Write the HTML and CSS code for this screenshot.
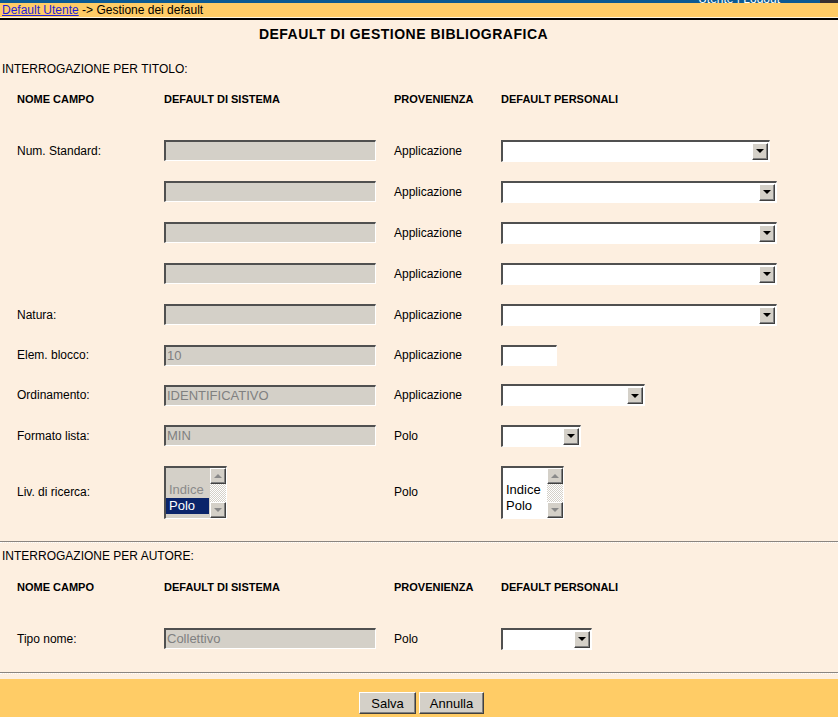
FILE: index.html
```html
<!DOCTYPE html>
<html lang="it">
<head>
<meta charset="utf-8">
<title>Gestione dei default</title>
<link rel="stylesheet" href="styles.css">
</head>
<body>
<div class="topstrip"><span class="topstrip-text">Utente | Logout</span><span class="topstrip-img"></span></div>
<div class="crumb"><a href="#" class="crumb-link">Default Utente</a> -&gt; Gestione dei default</div>
<h1 class="title">DEFAULT DI GESTIONE BIBLIOGRAFICA</h1>

<div class="section-label first">INTERROGAZIONE PER TITOLO:</div>
<div class="section">
  <div class="row head">
    <span>NOME CAMPO</span><span>DEFAULT DI SISTEMA</span><span>PROVENIENZA</span><span>DEFAULT PERSONALI</span>
  </div>
  <div class="rows">
    <div class="row r41">
      <span>Num. Standard:</span><span class="txt dis w212"></span><span>Applicazione</span>
      <div class="sel w269"><span class="sel-btn"><span class="tri-down"></span></span></div>
    </div>
    <div class="row r41">
      <span></span><span class="txt dis w212"></span><span>Applicazione</span>
      <div class="sel w276"><span class="sel-btn"><span class="tri-down"></span></span></div>
    </div>
    <div class="row r41">
      <span></span><span class="txt dis w212"></span><span>Applicazione</span>
      <div class="sel w276"><span class="sel-btn"><span class="tri-down"></span></span></div>
    </div>
    <div class="row r41">
      <span></span><span class="txt dis w212"></span><span>Applicazione</span>
      <div class="sel w276"><span class="sel-btn"><span class="tri-down"></span></span></div>
    </div>
    <div class="row r41">
      <span>Natura:</span><span class="txt dis w212"></span><span>Applicazione</span>
      <div class="sel w276"><span class="sel-btn"><span class="tri-down"></span></span></div>
    </div>
    <div class="row r40">
      <span>Elem. blocco:</span><span class="txt dis w212">10</span><span>Applicazione</span>
      <span class="txt w56"></span>
    </div>
    <div class="row r40">
      <span>Ordinamento:</span><span class="txt dis w212">IDENTIFICATIVO</span><span>Applicazione</span>
      <div class="sel w144"><span class="sel-btn"><span class="tri-down"></span></span></div>
    </div>
    <div class="row r41">
      <span>Formato lista:</span><span class="txt dis w212">MIN</span><span>Polo</span>
      <div class="sel w80"><span class="sel-btn"><span class="tri-down"></span></span></div>
    </div>
    <div class="row r72">
      <span>Liv. di ricerca:</span>
      <div class="list dis">
        <div class="list-items">
          <span class="opt">Indice</span>
          <span class="opt selected">Polo</span>
        </div>
        <div class="sbar">
          <span class="sbtn"><span class="tri-up"></span></span>
          <span class="strack"></span>
          <span class="sbtn"><span class="tri-dn"></span></span>
        </div>
      </div>
      <span>Polo</span>
      <div class="list">
        <div class="list-items">
          <span class="opt">Indice</span>
          <span class="opt">Polo</span>
        </div>
        <div class="sbar">
          <span class="sbtn"><span class="tri-up"></span></span>
          <span class="strack"></span>
          <span class="sbtn"><span class="tri-dn"></span></span>
        </div>
      </div>
    </div>
  </div>
</div>

<div class="divider d1"></div>

<div class="section-label second">INTERROGAZIONE PER AUTORE:</div>
<div class="section">
  <div class="row head head2">
    <span>NOME CAMPO</span><span>DEFAULT DI SISTEMA</span><span>PROVENIENZA</span><span>DEFAULT PERSONALI</span>
  </div>
  <div class="row r41 tipo">
    <span>Tipo nome:</span><span class="txt dis w212">Collettivo</span><span>Polo</span>
    <div class="sel w91"><span class="sel-btn"><span class="tri-down"></span></span></div>
  </div>
</div>

<div class="divider d2"></div>

<div class="footer">
  <button class="btn b-salva" type="button">Salva</button>
  <button class="btn b-annulla" type="button">Annulla</button>
</div>
</body>
</html>
```
FILE: styles.css
```css
html, body {
  margin: 0;
  padding: 0;
  background: #fdefe0;
  font-family: "Liberation Sans", Arial, sans-serif;
  font-size: 12px;
  color: #000;
  overflow: hidden;
}

.topstrip {
  height: 3px;
  background: #0b5a93;
  display: flex;
  justify-content: flex-end;
  align-items: flex-end;
  overflow: hidden;
}
.topstrip-text {
  color: #fff;
  font-size: 12px;
  line-height: 12px;
  margin-bottom: -2px;
  margin-right: 40px;
}
.topstrip-img {
  width: 18px;
  height: 3px;
  background: #3a3030;
}

.crumb {
  height: 14px;
  line-height: 14px;
  background: #ffcc66;
  padding-left: 2px;
  border-bottom: 1px solid #fff6e0;
  box-shadow: 0 2px 0 #000;
  position: relative;
}
.crumb-link {
  color: #1f1fd8;
  text-decoration: underline;
}

.title {
  margin: 0;
  margin-top: 8px;
  padding-right: 31px;
  font-size: 14px;
  line-height: 16px;
  font-weight: bold;
  text-align: center;
  letter-spacing: 0.5px;
}

.section-label {
  line-height: 14px;
  padding-left: 2px;
}
.section-label.first { margin-top: 20px; }
.section-label.second { margin-top: 6px; }

.section {
  padding-left: 17px;
}

.row {
  display: grid;
  grid-template-columns: 147px 230px 107px 1fr;
  align-items: center;
}
.row.head {
  height: 18px;
  margin-top: 14px;
  font-weight: bold;
  font-size: 11px;
}
.row.head2 { margin-top: 15px; }
.rows { margin-top: 22px; }
.r41 { height: 41px; }
.r40 { height: 40px; }
.r72 { height: 72px; }
.tipo { margin-top: 22px; }

.txt {
  display: block;
  box-sizing: border-box;
  height: 21px;
  background: #fff;
  border-style: solid;
  border-width: 2px 1px 1px 2px;
  border-color: #505050 #fff #fff #505050;
  font-size: 13px;
  line-height: 18px;
  padding-left: 1px;
  color: #808080;
  white-space: nowrap;
  overflow: hidden;
}
.txt.dis { background: #d4d0c8; }
.w212 { width: 212px; }
.w56 { width: 56px; }

.sel {
  display: flex;
  justify-content: flex-end;
  align-items: center;
  box-sizing: border-box;
  height: 22px;
  background: #fff;
  border-style: solid;
  border-width: 2px 1px 1px 2px;
  border-color: #505050 #fff #fff #505050;
  padding-right: 1px;
}
.w269 { width: 269px; }
.w276 { width: 276px; }
.w144 { width: 144px; }
.w80 { width: 80px; }
.w91 { width: 91px; }

.sel-btn, .sbtn {
  display: flex;
  align-items: center;
  justify-content: center;
  box-sizing: border-box;
  width: 16px;
  height: 17px;
  background: #d4d0c8;
  border-style: solid;
  border-width: 1px;
  border-color: #fff #404040 #404040 #fff;
  box-shadow: inset -1px -1px 0 #808080;
}
.tri-down {
  width: 0;
  height: 0;
  border-left: 4px solid transparent;
  border-right: 4px solid transparent;
  border-top: 4px solid #000;
}
.tri-up {
  width: 0;
  height: 0;
  border-left: 4px solid transparent;
  border-right: 4px solid transparent;
  border-bottom: 4px solid #8a8a8a;
}
.tri-dn {
  width: 0;
  height: 0;
  border-left: 4px solid transparent;
  border-right: 4px solid transparent;
  border-top: 4px solid #8a8a8a;
}

.list {
  display: flex;
  box-sizing: border-box;
  width: 63px;
  height: 53px;
  background: #fff;
  border-style: solid;
  border-width: 2px 1px 1px 2px;
  border-color: #505050 #fff #fff #505050;
}
.list.dis { background: #d4d0c8; }
.list-items {
  flex: 1;
  display: flex;
  flex-direction: column;
  justify-content: flex-end;
  padding-bottom: 4px;
  font-size: 13px;
  line-height: 16px;
}
.opt {
  padding-left: 3px;
  height: 16px;
  color: #000;
}
.list.dis .opt { color: #8a8a8a; }
.list.dis .opt.selected {
  background: #0a246a;
  color: #fff;
  margin-right: 1px;
}
.sbar {
  width: 16px;
  display: flex;
  flex-direction: column;
}
.sbar .sbtn { height: 16px; }
.strack {
  flex: 1;
  background-color: #fff;
  background-image: repeating-conic-gradient(#d4d0c8 0 25%, #fff 0 50%);
  background-size: 2px 2px;
}

.divider {
  border-top: 1px solid #8a8580;
  border-bottom: 1px dotted #fff;
}
.divider.d1 { margin-top: 13px; }
.divider.d2 { margin-top: 13px; }

.footer {
  margin-top: 5px;
  background: #ffcc66;
  height: 60px;
  padding-top: 13px;
  display: flex;
  justify-content: center;
  align-items: flex-start;
  gap: 3px;
  box-sizing: border-box;
  padding-left: 5px;
}
.btn {
  box-sizing: border-box;
  height: 22px;
  margin: 0;
  padding: 0;
  background: #d4d0c8;
  font-family: "Liberation Sans", Arial, sans-serif;
  font-size: 13px;
  color: #000;
  border-style: solid;
  border-width: 1px;
  border-color: #fff #404040 #404040 #fff;
  box-shadow: inset -1px -1px 0 #808080;
}
.b-salva { width: 57px; }
.b-annulla { width: 65px; }
```
